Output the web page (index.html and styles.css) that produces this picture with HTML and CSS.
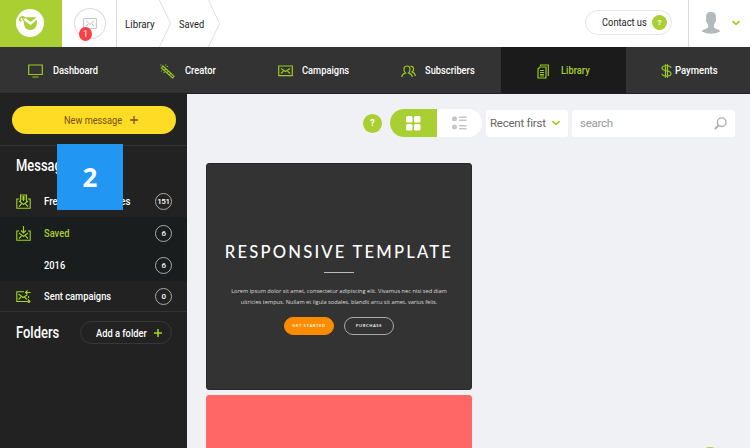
FILE: index.html
```html
<!DOCTYPE html>
<html lang="en">
<head>
<meta charset="utf-8">
<title>Library - Saved</title>
<link rel="stylesheet" href="styles.css">
</head>
<body>
<header class="top">
  <div class="logo"><svg width="28" height="28" viewBox="0 0 28 28"><circle cx="14" cy="14" r="14" fill="#fff"/><path d="M8.500 8.300H20.800L14.600 13ZM7.800 11.300L14.600 16L21 10.800C21 17.500 19.500 21 14.300 21C9.500 21 7.500 17 7.800 11.300Z" fill="#a9cf33"/><path d="M3.600 12C3 7.500 7.500 6.500 9 9.500M3.800 10.500L5.300 12.200M6.500 8.500L8 11.800" fill="none" stroke="#a9cf33" stroke-width="1.400"/></svg></div>
  <div class="inbox"><span class="ring"><svg width="14" height="11" viewBox="0 0 14 11" fill="none" stroke="#c2c4c6"><path d="M.6.6H13.400V10.400H.6ZM3 3L7 6.500L11 3M3 8.500L5 6M11 8.500L9 6"/></svg></span><b class="badge">1</b></div>
  <nav class="crumbs"><span class="t c1">Library</span><svg class="chev" width="13" height="47"><path d="M0-1L11.500 23.500L0 48" fill="none" stroke="#dedede"/></svg><span class="t c2">Saved</span><svg class="chev" width="13" height="47"><path d="M0-1L11.500 23.500L0 48" fill="none" stroke="#dedede"/></svg></nav>
  <div class="contact"><span class="t c3">Contact us</span><b class="help small">?</b></div>
  <div class="user"><svg width="20" height="24" viewBox="0 0 20 24" fill="#b3babc"><path d="M10 1C5.500 1 4.800 4 5.300 7.500C4.500 8 5 11 6.200 11.500C6.400 13.500 7.400 14 7.200 16.200C6 18 1.500 18 .8 20.500Q10 25 19.200 20.500C18.500 18 14 18 12.800 16.200C12.600 14 13.600 13.500 13.800 11.500C15 11 15.500 8 14.700 7.500C15.500 3 14 1 10 1Z"/></svg><svg width="8" height="6" viewBox="0 0 8 6"><path d="M.5 1L4 4.300L7.500 1" fill="none" stroke="#a2cc20" stroke-width="1.700"/></svg></div>
</header>
<nav class="menu">
  <a class="m1"><svg width="15" height="14" viewBox="0 0 15 14"><path d="M.7 1H14.300V10.500H.7ZM4.500 13H10.500"/></svg><span class="t">Dashboard</span></a>
  <a class="m2"><svg width="15" height="15" viewBox="0 0 15 15"><path d="M3 2L14 12.200L12.500 14L1.500 4ZM6 4L4.500 6M8.500 6.500L7 8.500M11 9L9.500 11M1 .5V1.500M5.500.5L6 1.500M7.500 2V3M1 7H2M4 8V9"/></svg><span class="t">Creator</span></a>
  <a class="m3"><svg width="15" height="12" viewBox="0 0 15 12"><path d="M.7 1H14.300V10.700H.7ZM3 3.500L7.500 6.500L12 3.500M3 8.500L5.500 6M12 8.500L9.500 6"/></svg><span class="t">Campaigns</span></a>
  <a class="m4"><svg width="15" height="13" viewBox="0 0 15 13"><path d="M.7 12C1 9 3 8.500 4.500 8C2 6 2.500 1 6 1S10 6 7.500 8C9 8.500 11 9 11.300 12M9.500 1.500C13 1 13.500 5 11 7C13 7.500 14 8.500 14.300 11"/></svg><span class="t">Subscribers</span></a>
  <a class="m5"><svg width="12" height="15" viewBox="0 0 12 15"><path d="M3.500 2V1H11.300V12M1 5L3 3H9V14H1ZM3 6.500H7M3 8.500H7M3 10.500H7M3 12H7"/></svg><span class="t">Library</span></a>
  <a class="m6"><svg width="11" height="14" viewBox="0 0 11 14"><path d="M10 4C9.500 1 1 1 1 4.200C1 7.500 10 6 10 9.500C10 13 1 13 1 9.700M4.500.2V13.800M6.500.2V13.800"/></svg><span class="t">Payments</span></a>
</nav>
<div class="page">
<aside class="side">
  <div class="newwrap"><a class="new"><span class="t c4">New message</span><svg width="8" height="8" viewBox="0 0 8 8"><path d="M4 0V8M0 4H8" stroke="#744d13" stroke-width="1.300"/></svg></a></div>
  <h2 class="h"><span class="t">Messages</span></h2>
  <a class="row"><svg width="15" height="15" viewBox="0 0 15 15"><path d="M3 5H.8V14.200H14.200V5H12M4.500 8V1H10.500V8M5.500 3H9.500M5.500 5H9.500M7.500 2V7M3 7L7.500 10.500L12 7M3 12.500L5.500 10M12 12.500L9.500 10"/></svg><span class="t r1">Freeform messages</span><i class="n">151</i></a>
  <a class="row dark on"><svg width="15" height="15" viewBox="0 0 15 15"><path d="M3 5H.8V14.200H14.200V5H12M7.500 0V7M5 4.500L7.500 7L10 4.500M3 7L7.500 10.500L12 7M3 12.500L5.500 10M12 12.500L9.500 10"/></svg><span class="t r2">Saved</span><i class="n">6</i></a>
  <a class="row dark"><svg width="15" height="15"></svg><span class="t r3">2016</span><i class="n">6</i></a>
  <a class="row last"><svg width="15" height="13" viewBox="0 0 15 13"><path d="M8 1.800H.8V11.500H14M12 9.500L14 11.500L12 13M14.500 2.500H9.500M11.500.5L9.500 2.500L11.500 4.500M2.500 4L7 7.500L11 5M2.500 9.500L5 7M11 9.500L8.500 7M12.500 6V8"/></svg><span class="t r4">Sent campaigns</span><i class="n">0</i></a>
  <div class="folders"><h2 class="h f"><span class="t">Folders</span></h2><a class="add"><span class="t c5">Add a folder</span><svg width="8" height="8" viewBox="0 0 8 8"><path d="M4 0V8M0 4H8" stroke="#a2d51c" stroke-width="1.600"/></svg></a></div>
  <div class="step">2</div>
</aside>
<main class="main">
  <div class="tools">
    <b class="help">?</b>
    <div class="toggle"><span class="grid"><svg width="15" height="15" fill="#fff"><rect width="6.500" height="6.500" rx="1.500"/><rect x="8" width="6.500" height="6.500" rx="1.500"/><rect y="8" width="6.500" height="6.500" rx="1.500"/><rect x="8" y="8" width="6.500" height="6.500" rx="1.500"/></svg></span><span class="list"><svg width="15" height="14" fill="#c4c6c9"><circle cx="2.500" cy="2.700" r="2.500"/><circle cx="2.500" cy="11" r="2.500"/><path d="M7 .5H14.500V2H7ZM7 3.500H14.500V5H7ZM7 9H14.500V10.500H7ZM7 12H14.500V13.500H7Z"/></svg></span></div>
    <div class="select"><span>Recent first</span><svg width="8" height="6" viewBox="0 0 8 6"><path d="M.5 1L4 4.300L7.500 1" fill="none" stroke="#a2cc20" stroke-width="1.600"/></svg></div>
    <div class="search"><span>search</span><svg width="13" height="13" viewBox="0 0 13 13" fill="none" stroke="#aaafb2"><circle cx="7.700" cy="5.200" r="4.300" stroke-width="1.400"/><path d="M4.500 8.500L.8 12" stroke-width="2"/></svg></div>
  </div>
  <article class="card"><h1>RESPONSIVE TEMPLATE</h1><hr><p>Lorem ipsum dolor sit amet, consectetur adipiscing elit. Vivamus nec nisi sed diam</p><p>ultricies tempus. Nullam et ligula sodales, blandit arcu sit amet, varius felis.</p><div class="btns"><span class="go">GET STARTED</span><span class="buy">PURCHASE</span></div></article>
  <article class="card red"></article>
  <span class="fab"></span>
</main>
</div>
</body>
</html>
```
FILE: styles.css
```css
* { box-sizing: border-box; }
body { margin: 0; width: 750px; height: 448px; overflow: hidden; display: flex; flex-direction: column; font: 11.5px/16px Roboto, sans-serif; background: #f0f1f5; }
svg { flex: none; display: block; }
.t { display: block; white-space: nowrap; flex: none; transform: scaleX(.81); transform-origin: 0 50%; }
.top { height: 47px; flex: none; display: flex; align-items: center; background: #fff; color: #222; }
.logo { width: 62px; height: 47px; background: #a9cf33; padding: 9px 0 0 16px; }
.inbox { position: relative; width: 55px; height: 47px; border-right: 1px solid #dcdcdc; padding: 8px 0 0 12px; }
.ring { display: flex; width: 32px; height: 31px; border: 1px solid #dcdcdc; border-radius: 50%; align-items: center; justify-content: center; }
.badge { position: absolute; left: 17px; top: 27px; width: 13px; height: 14px; border-radius: 50%; background: #fb4044; color: #fff; font: 9px/14px Roboto, sans-serif; text-align: center; }
.crumbs { display: flex; align-items: center; height: 47px; flex: 1; padding-left: 8px; }
.c1 { width: 34px; transform: scaleX(.85); }
.c2 { width: 30px; }
.chev + .c2 { margin-left: 7px; }
.c2 + .chev { margin-left: -1px; }
.contact { display: flex; align-items: center; width: 87px; height: 25px; margin: -3px 16px 0 0; border: 1px solid #e5e5e5; border-radius: 13px; padding-left: 16px; }
.c3 { width: 50px; }
.help { width: 19px; height: 19px; border-radius: 50%; background: #a9cf33; color: #fff; text-align: center; font: 700 9px/19px Roboto, sans-serif; }
.help.small { width: 15px; height: 15px; line-height: 15px; font-size: 8px; }
.user { display: flex; width: 62px; height: 47px; border-left: 1px solid #dcdcdc; align-items: center; padding: 0 0 1px 12px; gap: 11px; }
.menu { height: 47px; flex: none; display: grid; grid-template-columns: 125px 125px 126px 125px 125px 124px; background: #333; border-bottom: 1px solid #202020; color: #fff; font-weight: 500; }
.menu a { display: flex; align-items: center; gap: 9px; }
.menu svg { fill: none; stroke: #9cca20; stroke-width: 1.2; margin-top: 2px; }
.menu .m1 { padding-left: 28px; gap: 10px; }
.menu .m2 { padding-left: 35px; gap: 10px; }
.menu .m3 { padding-left: 28px; }
.menu .m4 { padding-left: 25px; }
.menu .m5 { padding-left: 36px; gap: 12px; background: #1b1b1b; color: #a9cf33; }
.menu .m6 { padding-left: 35px; gap: 3px; }
.m6 .t { transform: scaleX(.83); }
.page { flex: 1; min-height: 0; display: flex; overflow: hidden; }
.side { position: relative; width: 187px; flex: none; background: #222; color: #fff; font-weight: 500; }
.newwrap { height: 52px; padding: 12px 0 0 12px; border-bottom: 1px solid #333; }
.new { display: flex; align-items: center; width: 164px; height: 28px; border-radius: 14px; background: #fedc25; color: #744d13; padding-left: 52px; font-weight: 400; }
.c4 { width: 66px; transform: scaleX(.8); }
.h { margin: 0; height: 39px; padding: 10px 0 0 16px; font: 500 16px/20px Roboto, sans-serif; }
.row { display: flex; align-items: center; height: 32px; padding-left: 16px; }
.row svg { fill: none; stroke: #a2d51c; stroke-width: 1.1; }
.row .t { width: 111px; margin-left: 13px; }
.r1.t { transform: scaleX(.84); }
.dark { background: #191d1d; }
.on { color: #a9cf33; }
.n { width: 17px; height: 17px; border: 1px solid #ababab; border-radius: 50%; font: 500 8px/15px Roboto, sans-serif; text-align: center; color: #fff; letter-spacing: -.3px; }
.last { height: 31px; border-bottom: 1px solid #333; }
.folders { display: flex; align-items: center; height: 41px; }
.h.f { width: 80px; height: 20px; padding-top: 0; }
.add { display: flex; align-items: center; width: 92px; height: 23px; border: 1px solid #383838; border-radius: 12px; padding-left: 15px; }
.c5 { width: 58px; }
.step { position: absolute; left: 57px; top: 50px; width: 66px; height: 66px; background: #2196f3; font: 700 26px/66px "Open Sans", sans-serif; text-align: center; }
.main { position: relative; flex: 1; padding: 15px 0 0 19px; overflow: hidden; }
.tools { display: flex; align-items: center; height: 28px; padding-left: 157px; margin-bottom: 26px; }
.toggle { display: flex; width: 92px; height: 28px; margin-left: 8px; border-radius: 14px; overflow: hidden; background: #fff; }
.toggle span { display: flex; align-items: center; justify-content: center; width: 47px; }
.toggle .grid { background: #a9cf33; }
.toggle .list { width: 45px; }
.select, .search { display: flex; align-items: center; justify-content: space-between; height: 27px; border-radius: 3px; background: #fff; color: #666; padding: 0 8px 0 4px; margin-left: 4px; width: 82px; letter-spacing: -.25px; }
.search { width: 163px; color: #999; padding: 0 8px; }
.card { display: flex; flex-direction: column; align-items: center; width: 266px; height: 227px; margin-bottom: 5px; border-radius: 3px; background: #333; border: 1px solid #292929; color: #fff; }
.card h1 { margin: 79px 0 0; font: 500 16.6px/19px Lato, sans-serif; letter-spacing: 2.2px; white-space: nowrap; }
.card hr { width: 30px; height: 1px; margin: 10px 0 13px; border: 0; background: #bbb; }
.card p { margin: 0; font: 5.65px/11px "Open Sans", sans-serif; color: #ddd; white-space: nowrap; }
.btns { display: flex; gap: 10px; margin-top: 9px; font: 600 4.2px/16px "Open Sans", sans-serif; letter-spacing: .6px; text-align: center; }
.go, .buy { width: 50px; height: 18px; border: 1px solid #fb8c00; border-radius: 9px; background: #fb8c00; }
.buy { border-color: #aaa; background: none; }
.card.red { background: #f66; border-color: #f66; }
.fab { position: absolute; left: 513px; top: 353px; width: 20px; height: 20px; border-radius: 50%; background: #a9cf33; }
```
